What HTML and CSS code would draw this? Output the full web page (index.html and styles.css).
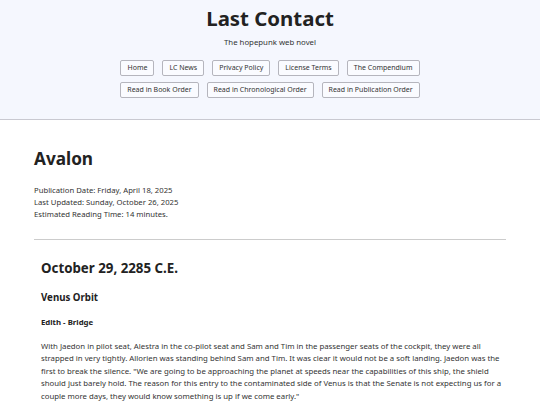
FILE: index.html
```html
<!DOCTYPE html>
<html lang="en">
<head>
    <meta charset="UTF-8">
    <meta name="viewport" content="width=device-width, initial-scale=1.0">
    <title>Avalon - Last Contact</title>
    <link rel="stylesheet" href="styles.css">
</head>
<body>
    <header class="site-header">
        <h1 class="site-title">Last Contact</h1>
        <p class="tagline">The hopepunk web novel</p>
        <nav class="site-nav">
            <div class="nav-row">
                <a class="nav-btn" href="#">Home</a>
                <a class="nav-btn" href="#">LC News</a>
                <a class="nav-btn" href="#">Privacy Policy</a>
                <a class="nav-btn" href="#">License Terms</a>
                <a class="nav-btn" href="#">The Compendium</a>
            </div>
            <div class="nav-row">
                <a class="nav-btn" href="#">Read in Book Order</a>
                <a class="nav-btn" href="#">Read in Chronological Order</a>
                <a class="nav-btn" href="#">Read in Publication Order</a>
            </div>
        </nav>
    </header>

    <main class="chapter">
        <h2 class="chapter-title">Avalon</h2>
        <div class="meta">
            <p>Publication Date: Friday, April 18, 2025</p>
            <p>Last Updated: Sunday, October 26, 2025</p>
            <p>Estimated Reading Time: 14 minutes.</p>
        </div>
        <hr class="divider">

        <article class="story">
            <h3 class="date-heading">October 29, 2285 C.E.</h3>
            <h4 class="place-heading">Venus Orbit</h4>
            <h5 class="pov-heading">Edith - Bridge</h5>
            <p>With Jaedon in pilot seat, Alestra in the co-pilot seat and Sam and Tim in the passenger seats of the cockpit, they were all strapped in very tightly. Allorien was standing behind Sam and Tim. It was clear it would not be a soft landing. Jaedon was the first to break the silence. "We are going to be approaching the planet at speeds near the capabilities of this ship, the shield should just barely hold. The reason for this entry to the contaminated side of Venus is that the Senate is not expecting us for a couple more days, they would know something is up if we come early."</p>
        </article>
    </main>
</body>
</html>
```

FILE: styles.css
```css
body {
    margin: 0;
    font-family: 'Noto Sans', 'Open Sans', sans-serif;
    color: #333;
    background-color: #fff;
}
.site-header {
    background-color: #f5f7fe;
    border-bottom: 1px solid #c9c9d1;
    text-align: center;
    padding: 4px 0 21px;
}
.site-title {
    margin: 0;
    font-size: 20.4px;
    line-height: 28px;
    color: #222;
}
.tagline {
    margin: 4px 0 12px;
    font-size: 7.8px;
    line-height: 12px;
}
.site-nav {
    display: flex;
    flex-direction: column;
    gap: 6px;
}
.nav-row {
    display: flex;
    justify-content: center;
    gap: 8px;
}
.nav-btn {
    display: inline-block;
    padding: 2px 6px;
    font-size: 7px;
    line-height: 10px;
    color: #333;
    text-decoration: none;
    background-color: #fafbff;
    border: 1px solid #b5b5bd;
    border-radius: 2px;
}
.chapter {
    padding: 27px 34px 0;
}
.chapter-title {
    margin: 0;
    font-size: 17.2px;
    line-height: 24px;
    color: #222;
}
.meta {
    margin-top: 13px;
    font-size: 7.7px;
    line-height: 12px;
}
.meta p {
    margin: 0;
}
.divider {
    margin: 19px 0 0;
    border: none;
    border-top: 1px solid #ccc;
}
.story {
    padding-left: 7px;
}
.date-heading {
    margin: 18px 0 0;
    font-size: 13.3px;
    line-height: 20px;
    color: #222;
}
.place-heading {
    margin: 12px 0 0;
    font-size: 9.7px;
    line-height: 16px;
    color: #222;
}
.pov-heading {
    margin: 10px 0 0;
    font-size: 7.8px;
    line-height: 12px;
    color: #222;
}
.story p {
    margin: 12px 0 0;
    font-size: 7.8px;
    line-height: 12.4px;
}
```
